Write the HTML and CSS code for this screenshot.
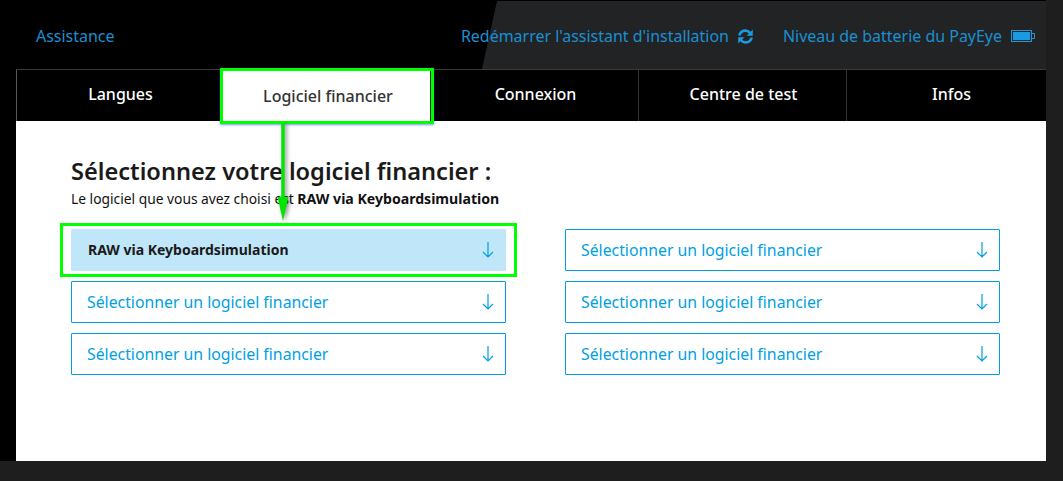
FILE: index.html
```html
<!DOCTYPE html>
<html lang="fr">
<head>
  <meta charset="UTF-8">
  <meta name="viewport" content="width=device-width, initial-scale=1.0">
  <title>Logiciel financier</title>
  <link rel="stylesheet" href="styles.css">
</head>
<body>

  <div class="app">
    <header class="top">
      <div class="top-slant"></div>
      <a class="top-link" href="#">Assistance</a>
      <div class="top-right">
        <a class="top-link" href="#">Redémarrer l'assistant d'installation
          <svg class="icon-sync" viewBox="1.5 1.5 13 13" width="15" height="15">
            <path d="M1.6 7.2C2 4 4.6 1.8 7.8 1.8c1.9 0 3.5.8 4.6 2.1l1.9-1.9v5.4H8.9l2-2c-.7-.9-1.8-1.4-3.1-1.4-2 0-3.6 1.3-4 3.2z"/>
            <path d="M14.4 8.8c-.4 3.2-3 5.4-6.2 5.4-1.9 0-3.5-.8-4.6-2.1L1.7 14V8.6h5.4l-2 2c.7.9 1.8 1.4 3.1 1.4 2 0 3.6-1.3 4-3.2z"/>
          </svg>
        </a>
        <a class="top-link" href="#">Niveau de batterie du PayEye
          <svg class="icon-battery" viewBox="0 0 24 12" width="24" height="12">
            <rect x="0.5" y="0.5" width="20" height="11" fill="none" stroke="#1a9ae0"/>
            <rect x="2" y="2" width="17" height="8" fill="#1a9ae0"/>
            <path d="M21 3.5h2.5v5H21" fill="none" stroke="#1a9ae0"/>
          </svg>
        </a>
      </div>
    </header>

    <nav class="tabs">
      <a class="tab" href="#">Langues</a>
      <a class="tab active" href="#">Logiciel financier</a>
      <a class="tab" href="#">Connexion</a>
      <a class="tab" href="#">Centre de test</a>
      <a class="tab tab-last" href="#">Infos</a>
    </nav>

    <main class="content">
      <h1>Sélectionnez votre logiciel financier :</h1>
      <p class="chosen">Le logiciel que vous avez choisi est <b>RAW via Keyboardsimulation</b></p>

      <div class="selects">
        <div class="select selected">RAW via Keyboardsimulation
          <svg class="arrow" viewBox="0 0 12 16" width="12" height="16"><path d="M6 0v15M1 10l5 5 5-5"/></svg>
        </div>
        <div class="select">Sélectionner un logiciel financier
          <svg class="arrow" viewBox="0 0 12 16" width="12" height="16"><path d="M6 0v15M1 10l5 5 5-5"/></svg>
        </div>
        <div class="select">Sélectionner un logiciel financier
          <svg class="arrow" viewBox="0 0 12 16" width="12" height="16"><path d="M6 0v15M1 10l5 5 5-5"/></svg>
        </div>
        <div class="select">Sélectionner un logiciel financier
          <svg class="arrow" viewBox="0 0 12 16" width="12" height="16"><path d="M6 0v15M1 10l5 5 5-5"/></svg>
        </div>
        <div class="select">Sélectionner un logiciel financier
          <svg class="arrow" viewBox="0 0 12 16" width="12" height="16"><path d="M6 0v15M1 10l5 5 5-5"/></svg>
        </div>
        <div class="select">Sélectionner un logiciel financier
          <svg class="arrow" viewBox="0 0 12 16" width="12" height="16"><path d="M6 0v15M1 10l5 5 5-5"/></svg>
        </div>
      </div>
    </main>
  </div>

  <!-- annotations vertes par dessus la capture -->
  <div class="mark mark-tab"></div>
  <div class="mark mark-select"></div>
  <svg class="mark-arrow" viewBox="0 0 16 100" width="16" height="100">
    <path d="M6.3 0h3.4v74h3.8L8 98 2.5 74h3.8z"/>
  </svg>

</body>
</html>
```

FILE: styles.css
```css
* {
  box-sizing: border-box;
  margin: 0;
  padding: 0;
}

body {
  position: relative;
  width: 1063px;
  height: 481px;
  overflow: hidden;
  background: #1e1e1e;
  font-family: "Noto Sans", "Open Sans", sans-serif;
}

.app {
  width: 1046px;
  height: 461px;
  padding-top: 1px;
  display: flex;
  flex-direction: column;
  background: black;
}

.top {
  position: relative;
  height: 68px;
  padding: 2px 11px 0 36px;
  display: flex;
  justify-content: space-between;
  align-items: center;
  flex-shrink: 0;
}

.top-slant {
  position: absolute;
  inset: 0;
  background: #222325;
  clip-path: polygon(497px 0, 100% 0, 100% 100%, 482px 100%);
}

.top-link {
  position: relative;
  display: flex;
  align-items: center;
  gap: 9px;
  color: #1a8fd1;
  font-size: 16px;
  letter-spacing: -0.02px;
  text-decoration: none;
  white-space: nowrap;
}

.top-right {
  display: flex;
  align-items: center;
  gap: 30px;
}

.icon-sync {
  fill: #1a9ae0;
}

.tabs {
  display: grid;
  grid-template-columns: 206px 208px 208px 208px 200px;
  height: 52px;
  margin-left: 16px;
  border-top: 1px solid #3a3a3c;
  flex-shrink: 0;
}

.tab {
  display: flex;
  justify-content: center;
  align-items: center;
  padding: 0 0 4px 2px;
  color: white;
  font-size: 16px;
  font-weight: 500;
  text-decoration: none;
  border-left: 1px solid #333;
}

.tab:first-child {
  border-left: 1px solid #55575a;
}

.tab-last {
  padding-left: 10px;
}

.tab.active {
  background: white;
  color: #333;
  padding: 1px 0 0 3px;
}

.content {
  flex: 1;
  margin-left: 16px;
  padding: 35px 46px 0 55px;
  background: white;
}

h1 {
  font-size: 23.6px;
  font-weight: 600;
  line-height: 30px;
  color: #1a1a1a;
}

.chosen {
  font-size: 13.8px;
  line-height: 25px;
  color: #111;
}

.chosen b {
  font-size: 14.1px;
}

.selects {
  display: grid;
  grid-template-columns: 434.5px 435px;
  grid-template-rows: repeat(3, 42px);
  grid-auto-flow: column;
  column-gap: 59.5px;
  row-gap: 10px;
  margin-top: 18px;
}

.select {
  display: flex;
  justify-content: space-between;
  align-items: center;
  padding: 0 11px 0 15px;
  border: 1px solid #009fe3;
  border-radius: 1px;
  color: #009fe3;
  font-size: 15.8px;
}

.select.selected {
  padding: 0 11px 1px 16px;
  background: #bfe6f9;
  border-color: #bfe6f9;
  color: #1a1a1a;
  font-size: 14px;
  font-weight: 700;
}

.arrow {
  fill: none;
  stroke: #009fe3;
  stroke-width: 1.2;
}

.mark {
  position: absolute;
  border: 3px solid #00ff00;
}

.mark-tab {
  left: 220px;
  top: 68px;
  width: 214px;
  height: 56px;
  box-shadow: 0 1px 2px rgba(30, 80, 255, 0.6);
}

.mark-select {
  left: 60px;
  top: 223px;
  width: 457px;
  height: 54px;
}

.mark-arrow {
  position: absolute;
  left: 275px;
  top: 123px;
  fill: #00e600;
  filter: drop-shadow(2px 1px 2px rgba(0, 0, 0, 0.45));
}
```
